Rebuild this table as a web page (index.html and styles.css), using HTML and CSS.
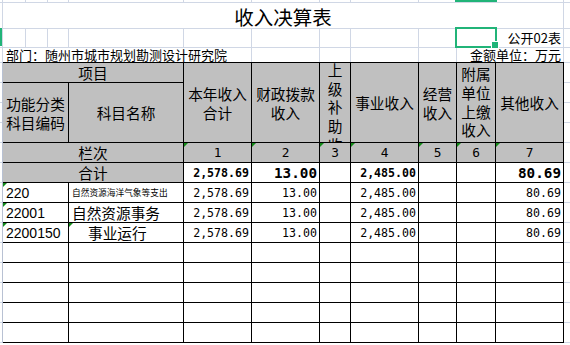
FILE: index.html
```html
<!DOCTYPE html>
<html lang="zh-CN">
<head>
<meta charset="utf-8">
<title>收入决算表</title>
<link rel="stylesheet" href="styles.css">
</head>
<body>
<div class="sheet">
  <div class="top">
    <div></div><div></div><div></div><div></div><div></div><div></div><div></div><div></div><div></div><div></div><div></div><div></div><div></div>

    <div></div>
    <div class="title">收入决算表</div>
    <div></div>

    <div></div><div></div><div></div><div></div><div></div><div></div><div></div><div></div><div></div><div></div><div></div>
    <div class="pub">公开02表</div>
    <div></div>

    <div></div>
    <div class="dept">部门：随州市城市规划勘测设计研究院</div>
    <div></div><div></div><div></div><div></div>
    <div class="unit">金额单位：万元</div>
    <div></div>
  </div>

  <div class="main">
    <div class="stub left"></div>
    <div class="tbl">
      <div class="g h xm">项目</div>
      <div class="g h hd col3">本年收入<br>合计</div>
      <div class="g h hd col4">财政拨款<br>收入</div>
      <div class="g h hd col5 vt"><div class="vchars">上级补助收入</div></div>
      <div class="g h hd col6">事业收入</div>
      <div class="g h hd col7">经营<br>收入</div>
      <div class="g h hd col8 tight">附属<br>单位<br>上缴<br>收入</div>
      <div class="g h hd col9">其他收入</div>
      <div class="g h">功能分类<br>科目编码</div>
      <div class="g h">科目名称</div>

      <div class="g h span2">栏次</div>
      <div class="g d tri">1</div>
      <div class="g d tri">2</div>
      <div class="g d tri">3</div>
      <div class="g d tri">4</div>
      <div class="g d tri">5</div>
      <div class="g d tri">6</div>
      <div class="g d tri">7</div>

      <div class="g h span2">合计</div>
      <div class="n b">2,578.69</div>
      <div class="n bb">13.00</div>
      <div></div>
      <div class="n b">2,485.00</div>
      <div></div>
      <div></div>
      <div class="n bb">80.69</div>

      <div class="code tri">220</div>
      <div class="name tiny">自然资源海洋气象等支出</div>
      <div class="n">2,578.69</div>
      <div class="n">13.00</div>
      <div></div>
      <div class="n">2,485.00</div>
      <div></div>
      <div></div>
      <div class="n">80.69</div>

      <div class="code tri">22001</div>
      <div class="name">自然资源事务</div>
      <div class="n">2,578.69</div>
      <div class="n">13.00</div>
      <div></div>
      <div class="n">2,485.00</div>
      <div></div>
      <div></div>
      <div class="n">80.69</div>

      <div class="code tri">2200150</div>
      <div class="name indent tri">事业运行</div>
      <div class="n">2,578.69</div>
      <div class="n">13.00</div>
      <div></div>
      <div class="n">2,485.00</div>
      <div></div>
      <div></div>
      <div class="n">80.69</div>

      <div></div><div></div><div></div><div></div><div></div><div></div><div></div><div></div><div></div>
      <div></div><div></div><div></div><div></div><div></div><div></div><div></div><div></div><div></div>
      <div></div><div></div><div></div><div></div><div></div><div></div><div></div><div></div><div></div>
      <div></div><div></div><div></div><div></div><div></div><div></div><div></div><div></div><div></div>
      <div></div><div></div><div></div><div></div><div></div><div></div><div></div><div></div><div></div>
    </div>
    <div class="stub right"></div>
  </div>

  <div class="colmark"></div>
  <div class="rowmark"></div>
  <div class="sel"></div>
  <div class="handle"></div>
</div>
</body>
</html>
```

FILE: styles.css
```css
* {
  box-sizing: border-box;
  margin: 0;
  padding: 0;
}

html, body {
  width: 570px;
  height: 345px;
  overflow: hidden;
  background: #ffffff;
}

body {
  font-family: "Noto Sans CJK SC", sans-serif;
  color: #000000;
}

.sheet {
  position: relative;
  width: 570px;
  height: 345px;
}

/* ---------- area above the table (plain spreadsheet grid) ---------- */
.top {
  display: grid;
  grid-template-columns: 2px 22px 21px 20px 114px 67px 67px 30px 67px 37px 38px 67px 6px;
  grid-template-rows: 2px 25px 18px 14px;
  gap: 1px;
  background: #d0d7e5;
}

.top > div {
  background: #ffffff;
  white-space: nowrap;
}

.title {
  grid-column: 2 / 13;
  font-size: 19.5px;
  line-height: 22px;
  padding-top: 3px;
  text-align: center;
}

.pub {
  font-size: 13px;
  line-height: 18px;
  text-align: right;
  padding-right: 2px;
}

.dept {
  grid-column: 2 / 7;
  font-size: 13px;
  line-height: 14px;
  padding-left: 3px;
  overflow: visible;
}

.unit {
  grid-column: 11 / 13;
  font-size: 13px;
  line-height: 14px;
  text-align: right;
  padding-right: 2px;
}

/* ---------- table ---------- */
.main {
  display: flex;
  height: 281px;
}

.stub {
  height: 281px;
  background: repeating-linear-gradient(to bottom, #d0d7e5 0 1px, transparent 1px 20px), #ffffff;
}

.stub.left {
  width: 3px;
  border-right: 1px solid #b8c1d3;
}

.stub.right {
  width: 6px;
}

.tbl {
  display: grid;
  width: 561px;
  grid-template-columns: 66px 115px 68px 68px 31px 68px 38px 39px 68px;
  grid-template-rows: 20px 60px 20px repeat(9, 20px);
  border-top: 1px solid #000000;
}

.tbl > div {
  position: relative;
  display: flex;
  align-items: center;
  justify-content: center;
  border-right: 1px solid #000000;
  border-bottom: 1px solid #000000;
  background: #ffffff;
  white-space: nowrap;
}

.tbl > div.g {
  background: #c0c0c0;
}

.h {
  font-size: 14.67px;
  line-height: 19px;
  text-align: center;
}

.xm {
  grid-column: 1 / 3;
}

.span2 {
  grid-column: 1 / 3;
}

.hd {
  grid-row: 1 / 3;
}

.col3 { grid-column: 3; }
.col4 { grid-column: 4; }
.col5 { grid-column: 5; }
.col6 { grid-column: 6; }
.col7 { grid-column: 7; }
.col8 { grid-column: 8; }
.col9 { grid-column: 9; }

.tight {
  line-height: 18.7px;
}

.tbl > div.vt {
  align-items: flex-start;
  overflow: hidden;
}

.vchars {
  width: 15px;
  white-space: normal;
  line-height: 18.7px;
  margin-top: -2px;
  text-align: center;
}

.d {
  font-family: "DejaVu Sans Mono", "Liberation Mono", monospace;
  font-size: 12.8px;
}

.tbl > div.n {
  justify-content: flex-end;
  padding-right: 2px;
  padding-top: 1px;
  font-family: "DejaVu Sans Mono", "Liberation Mono", monospace;
  font-size: 11.6px;
}

.tbl > div.b {
  font-weight: bold;
}

.tbl > div.bb {
  font-weight: bold;
  font-size: 14.3px;
}

.tbl > div.code {
  justify-content: flex-start;
  padding-left: 3px;
  font-family: "Liberation Sans", Arial, sans-serif;
  font-size: 14px;
}

.tbl > div.name {
  justify-content: flex-start;
  padding-left: 3px;
  font-size: 14.67px;
}

.tbl > div.tiny {
  font-size: 8.7px;
}

.tbl > div.indent {
  padding-left: 19px;
}

.tri::before {
  content: "";
  position: absolute;
  left: 0;
  top: 0;
  border-top: 4px solid #138a18;
  border-right: 4px solid transparent;
}

/* ---------- selection overlays ---------- */
.colmark {
  position: absolute;
  left: 455px;
  top: 0;
  width: 42px;
  height: 2px;
  background: #21b478;
}

.rowmark {
  position: absolute;
  left: 0;
  top: 28px;
  width: 2px;
  height: 18px;
  background: #21b478;
}

.sel {
  position: absolute;
  left: 455px;
  top: 27px;
  width: 42px;
  height: 21px;
  border: 2px solid #21b478;
}

.handle {
  position: absolute;
  left: 491px;
  top: 41px;
  width: 8px;
  height: 8px;
  border: 1px solid #ffffff;
  background: #21b478;
}
```
